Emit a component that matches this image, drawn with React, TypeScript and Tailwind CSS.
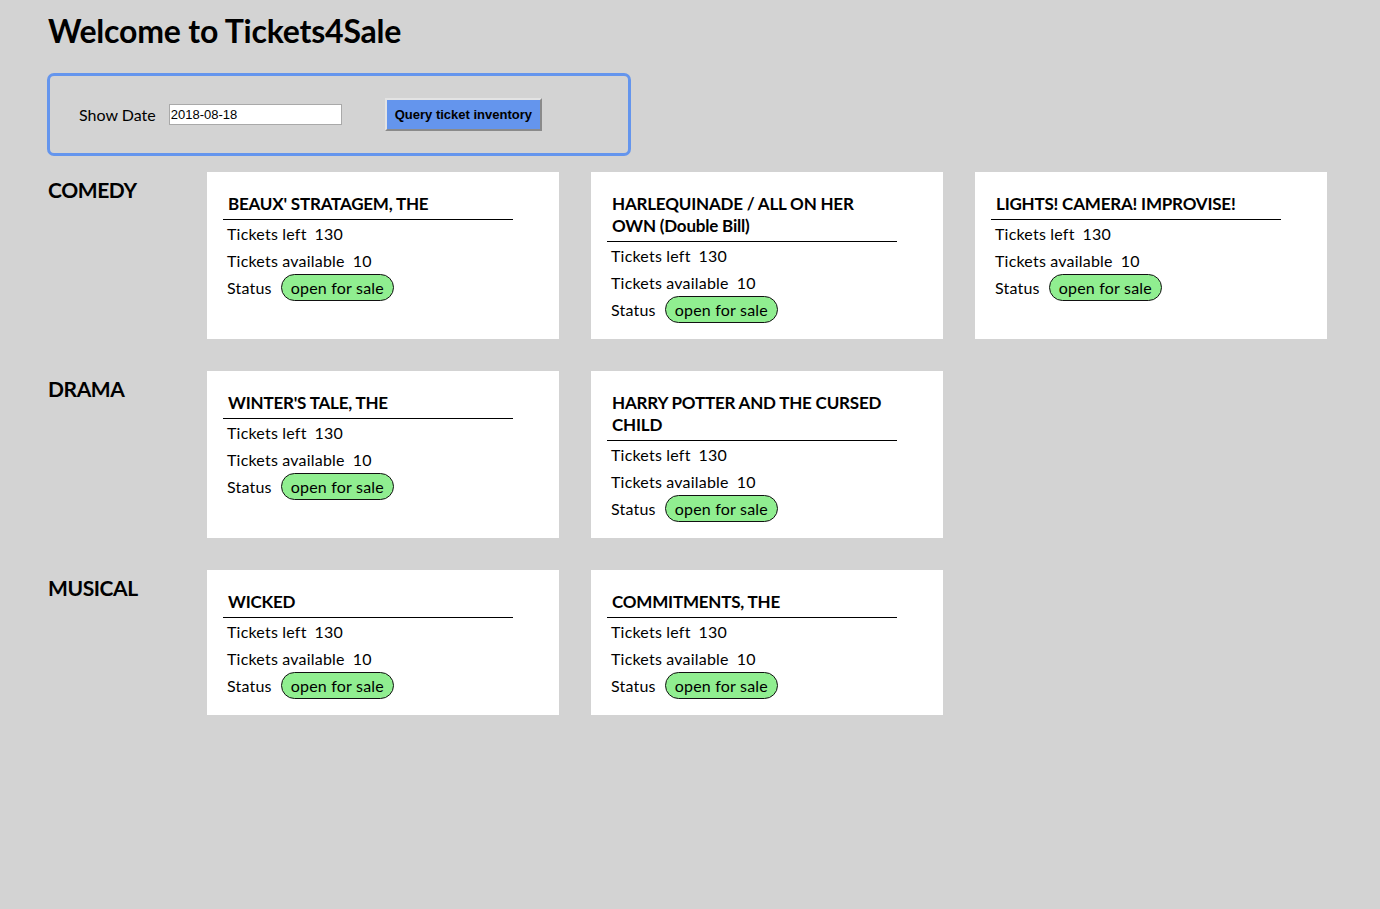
import React from "react";

type Show = { title: string };
const categories: { name: string; shows: Show[] }[] = [
  {
    name: "COMEDY",
    shows: [
      { title: "BEAUX' STRATAGEM, THE" },
      { title: "HARLEQUINADE / ALL ON HER OWN (Double Bill)" },
      { title: "LIGHTS! CAMERA! IMPROVISE!" },
    ],
  },
  {
    name: "DRAMA",
    shows: [{ title: "WINTER'S TALE, THE" }, { title: "HARRY POTTER AND THE CURSED CHILD" }],
  },
  {
    name: "MUSICAL",
    shows: [{ title: "WICKED" }, { title: "COMMITMENTS, THE" }],
  },
];

function Card({ title }: Show) {
  return (
    <div className="w-[352px] bg-white pt-[21px] pb-[16px] px-[16px]">
      <h3 className="w-[290px] pl-[5px] pb-[4px] border-b border-black text-[17px] leading-[22px] font-bold tracking-[-0.2px] text-black">
        {title}
      </h3>
      <div className="pl-[4px] text-[16px] tracking-[0.2px] text-black">
        <div className="h-[27px] flex items-center gap-[8px]">
          <span>Tickets left</span>
          <span>130</span>
        </div>
        <div className="h-[27px] flex items-center gap-[8px]">
          <span>Tickets available</span>
          <span>10</span>
        </div>
        <div className="h-[27px] flex items-center gap-[9px]">
          <span>Status</span>
          <span className="h-[27px] px-[9px] flex items-center rounded-full border border-[#111] bg-[#90ee90]">
            open for sale
          </span>
        </div>
      </div>
    </div>
  );
}

export default function App() {
  return (
    <div
      className="min-h-[909px] bg-[#d3d3d3] pl-[48px] pt-[12px] pb-10 text-black"
      style={{ fontFamily: "Lato, 'Noto Sans', sans-serif" }}
    >
      <h1 className="text-[32px] leading-[38px] font-bold tracking-[-0.2px]">Welcome to Tickets4Sale</h1>
      <div className="mt-[23px] -ml-px w-[584px] h-[83px] border-[3px] border-[#6495ed] rounded-[7px] flex items-center pl-[29px]">
        <span className="text-[16px]">Show Date</span>
        <input
          type="text"
          defaultValue="2018-08-18"
          className="ml-[13px] w-[173px] h-[21px] bg-white border border-[#a9a9a9] px-[1px] text-[13px] text-black outline-none"
          style={{ fontFamily: "'Liberation Sans', Arial, sans-serif" }}
        />
        <button
          className="ml-[43px] h-[33px] px-[8px] bg-[#6495ed] border-2 border-t-[#e3e3e3] border-l-[#e3e3e3] border-r-[#8a8a8a] border-b-[#8a8a8a] text-[13px] font-bold text-black"
          style={{ fontFamily: "'Liberation Sans', Arial, sans-serif" }}
        >
          Query ticket inventory
        </button>
      </div>
      <div className="mt-[16px] flex flex-col gap-[32px]">
        {categories.map((c) => (
          <div key={c.name} className="flex items-stretch">
            <div className="w-[159px] shrink-0 pt-[5px] text-[21px] leading-[25px] font-bold tracking-[-0.4px]">
              {c.name}
            </div>
            <div className="flex gap-[32px] items-stretch">
              {c.shows.map((s) => (
                <Card key={s.title} title={s.title} />
              ))}
            </div>
          </div>
        ))}
      </div>
    </div>
  );
}
